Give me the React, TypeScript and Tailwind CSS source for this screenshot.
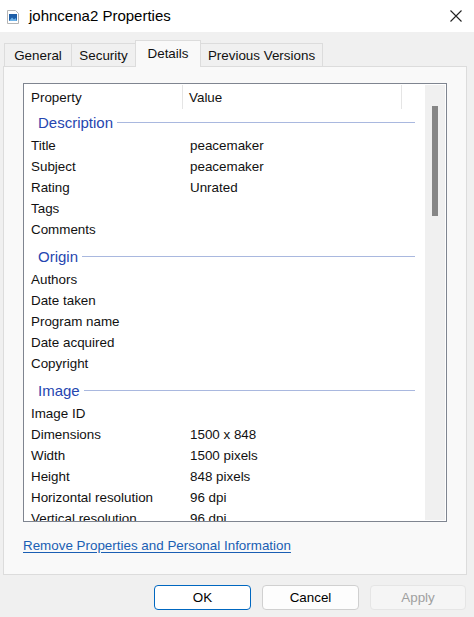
const groups: { name: string; rows: [string, string][] }[] = [
  {
    name: 'Description',
    rows: [
      ['Title', 'peacemaker'],
      ['Subject', 'peacemaker'],
      ['Rating', 'Unrated'],
      ['Tags', ''],
      ['Comments', ''],
    ],
  },
  {
    name: 'Origin',
    rows: [
      ['Authors', ''],
      ['Date taken', ''],
      ['Program name', ''],
      ['Date acquired', ''],
      ['Copyright', ''],
    ],
  },
  {
    name: 'Image',
    rows: [
      ['Image ID', ''],
      ['Dimensions', '1500 x 848'],
      ['Width', '1500 pixels'],
      ['Height', '848 pixels'],
      ['Horizontal resolution', '96 dpi'],
      ['Vertical resolution', '96 dpi'],
      ['Bit depth', '24'],
    ],
  },
]

function FileIcon() {
  return (
    <svg width="12" height="14" viewBox="0 0 12 14">
      <path d="M0.5 0.5h8l3 3v10h-11z" fill="#fff" stroke="#b5b5b5" />
      <rect x="2" y="4" width="8" height="7" fill="#1f5fa8" />
      <path d="M2 11l3-3.5 2 2 1.5-1.5 1.5 3z" fill="#6fb3e8" />
    </svg>
  )
}

function Tab({ label, width, active }: { label: string; width: string; active?: boolean }) {
  return (
    <div
      className={`${width} -ml-px first:ml-0 flex justify-center items-center border border-b-0 border-[#dcdcdc] ${
        active ? 'h-[27px] pt-px bg-[#f9f9f9] -mb-px relative z-10' : 'h-[23px] pt-[3px] bg-[#f0f0f0]'
      }`}
    >
      {label}
    </div>
  )
}

export default function App() {
  return (
    <div
      className="w-[474px] h-[617px] bg-[#f0f0f0] text-[13.4px] text-[#111] flex flex-col overflow-hidden"
      style={{ fontFamily: '"Liberation Sans", Arial, sans-serif' }}
    >
      <div className="h-[32px] bg-white flex items-center shrink-0">
        <div className="ml-[7px] mt-[1px] flex">
          <FileIcon />
        </div>
        <span className="ml-[10px] pt-px text-[15px] text-black">johncena2 Properties</span>
        <svg className="ml-auto mr-[12px]" width="12" height="12" viewBox="0 0 12 12">
          <path d="M0.5 0.5l11 11M11.5 0.5l-11 11" stroke="#222" strokeWidth="1.1" />
        </svg>
      </div>

      <div className="flex items-end h-[34px] pl-[4px] shrink-0">
        <Tab label="General" width="w-[68px]" />
        <Tab label="Security" width="w-[65px]" />
        <Tab label="Details" width="w-[66px]" active />
        <Tab label="Previous Versions" width="w-[123px]" />
      </div>

      <div className="ml-[3px] w-[464px] h-[509px] bg-[#f9f9f9] border border-[#dcdcdc] flex flex-col shrink-0">
        <div className="mt-[16px] ml-[19px] w-[424px] h-[439px] bg-white border border-[#7f8590] flex overflow-hidden">
          <div className="flex-1 min-w-0 overflow-hidden">
            <div className="h-[26px] flex items-stretch">
              <div className="w-[159px] pl-[7px] pt-[2px] flex items-center border-r border-[#e5e5e5] my-[1px]">Property</div>
              <div className="w-[219px] pl-[6px] pt-[2px] flex items-center border-r border-[#e5e5e5] my-[1px]">Value</div>
            </div>
            {groups.map((g, gi) => (
              <div key={g.name}>
                <div className={`h-[25px] flex items-center ${gi > 0 ? 'mt-[4px]' : ''}`}>
                  <span className="ml-[14px] pt-[2px] text-[15px] text-[#2646b0]">{g.name}</span>
                  <div className="ml-[4px] w-0 flex-1 mr-[10px] h-px bg-[#a9b8df]" />
                </div>
                {g.rows.map(([k, v]) => (
                  <div key={k} className="h-[21px] pt-[2px] flex items-center whitespace-nowrap">
                    <div className="w-[166px] shrink-0 pl-[7px]">{k}</div>
                    <div>{v}</div>
                  </div>
                ))}
              </div>
            ))}
          </div>
          <div className="w-[20px] mt-px mb-px mr-px bg-[#f0f0f0] flex justify-center shrink-0">
            <div className="w-[6px] h-[110px] mt-[21px] bg-[#868686]" />
          </div>
        </div>

        <div className="mt-[14px] ml-[19px] h-[18px] pt-[2px] flex items-center">
          <span className="text-[#1a5fb4] underline underline-offset-2">Remove Properties and Personal Information</span>
        </div>
      </div>

      <div className="flex gap-[11px] mt-[10px] ml-[154px]">
        <button className="w-[97px] h-[25px] pt-px bg-white border border-[#0067c0] rounded-[4px] text-black">OK</button>
        <button className="w-[97px] h-[25px] pt-px bg-[#fdfdfd] border border-[#d0d0d0] rounded-[4px] text-black">Cancel</button>
        <button className="w-[96px] h-[25px] pt-px bg-[#f5f5f5] border border-[#e5e5e5] rounded-[4px] text-[#a0a0a0]">Apply</button>
      </div>
    </div>
  )
}
